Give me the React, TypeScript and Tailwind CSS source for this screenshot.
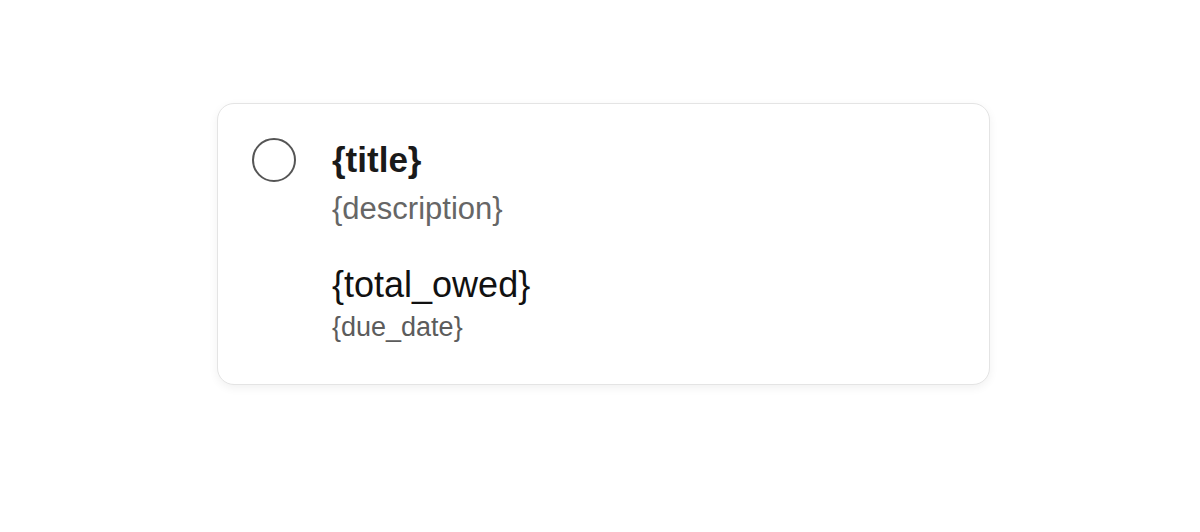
export default function App() {
  return (
    <div
      className="w-[1200px] h-[532px] bg-white pt-[103px] pl-[217px]"
      style={{ fontFamily: '"Liberation Sans", Arial, sans-serif' }}
    >
      <div className="w-[773px] h-[282px] rounded-[17px] border border-[#e4e4e4] bg-white shadow-[0_3px_10px_rgba(0,0,0,0.06)] pt-[34px] pl-[34px] flex items-start gap-[36px]">
        <div className="w-[44px] h-[44px] rounded-full border-2 border-[#555555] shrink-0" />
        <div className="flex flex-col">
          <div className="text-[35px] leading-[44px] font-bold text-[#1a1a1a]">{'{title}'}</div>
          <div className="mt-[9px] text-[31px] leading-[36px] text-[#666666]">{'{description}'}</div>
          <div className="mt-[38px] text-[36px] leading-[40px] text-[#111111]">{'{total_owed}'}</div>
          <div className="mt-[6px] text-[27px] leading-[32px] text-[#5c5c5c]">{'{due_date}'}</div>
        </div>
      </div>
    </div>
  );
}
